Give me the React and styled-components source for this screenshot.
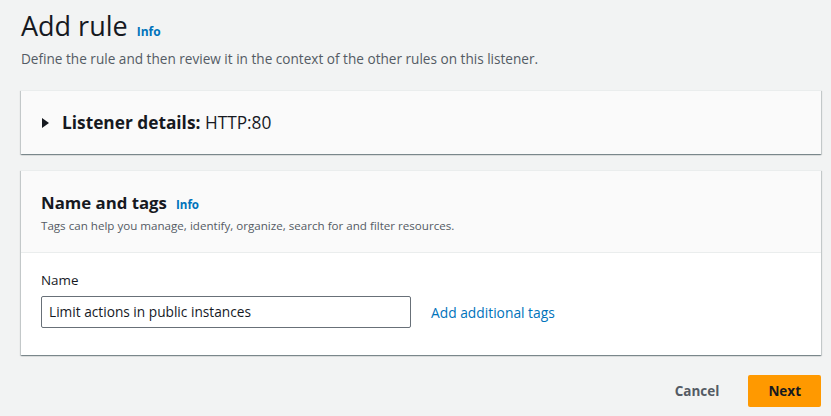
import React from "react";
import styled, { createGlobalStyle } from "styled-components";

const GlobalStyle = createGlobalStyle`
  body {
    margin: 0;
    background: #f2f3f3;
    font-family: "Open Sans", "Noto Sans", Arial, sans-serif;
    color: #16191f;
  }
`;

const Page = styled.div`
  width: 800px;
  padding: 6px 10px 9px 21px;
`;

const TitleRow = styled.div`
  display: flex;
  align-items: baseline;
  gap: 9px;
`;

const Title = styled.h1`
  margin: 0;
  font-size: 27px;
  line-height: 40px;
  font-weight: 400;
  color: #16191f;
`;

const InfoLink = styled.a`
  font-size: ${(p) => p.$size || 12}px;
  font-weight: 700;
  color: #0073bb;
  text-decoration: none;
`;

const Description = styled.p`
  margin: 2px 0 0;
  font-size: 13.6px;
  line-height: 22px;
  color: #545b64;
`;

const Card = styled.section`
  margin-top: ${(p) => p.$top}px;
  background: #fff;
  border-top: 1px solid #eaeded;
  box-shadow: 0 1px 1px 0 rgba(0, 28, 36, 0.3),
    1px 1px 1px 0 rgba(0, 28, 36, 0.15), -1px 1px 1px 0 rgba(0, 28, 36, 0.15);
`;

const CollapsedHeader = styled.div`
  display: flex;
  align-items: center;
  gap: 13px;
  height: 63px;
  padding: 0 20px 0 21px;
  background: #fafafa;
  font-size: 17.3px;
`;

const Caret = styled.span`
  width: 0;
  height: 0;
  border-top: 5px solid transparent;
  border-bottom: 5px solid transparent;
  border-left: 7px solid #16191f;
`;

const Strong = styled.strong`
  font-weight: 700;
`;

const SectionHeader = styled.div`
  background: #fafafa;
  border-bottom: 1px solid #eaeded;
  padding: 20px 20px 18px;
`;

const SectionTitleRow = styled.div`
  display: flex;
  align-items: baseline;
  gap: 9px;
`;

const SectionTitle = styled.h2`
  margin: 0;
  font-size: 16.8px;
  line-height: 24px;
  font-weight: 700;
`;

const SectionDesc = styled.p`
  margin: 3px 0 0;
  font-size: 11.6px;
  line-height: 16px;
  color: #545b64;
`;

const SectionBody = styled.div`
  padding: 17px 20px 27px;
`;

const Label = styled.label`
  display: block;
  font-size: 13.4px;
  line-height: 20px;
  color: #16191f;
`;

const FieldRow = styled.div`
  display: flex;
  align-items: center;
  gap: 20px;
  margin-top: 6px;
`;

const Input = styled.input`
  box-sizing: border-box;
  width: 370px;
  height: 32px;
  padding: 0 7px 1px;
  border: 1px solid #687078;
  border-radius: 2px;
  font-family: inherit;
  font-size: 13.7px;
  color: #16191f;
  background: #fff;
`;

const TextLink = styled.a`
  font-size: 13.8px;
  color: #0073bb;
  text-decoration: none;
`;

const Footer = styled.div`
  display: flex;
  justify-content: flex-end;
  align-items: center;
  gap: 10px;
  margin-top: 20px;
`;

const Button = styled.button`
  height: 32px;
  padding: 0 ${(p) => (p.$primary ? "20px" : "19px")};
  border: none;
  border-radius: 2px;
  font-family: inherit;
  font-size: 13.5px;
  font-weight: 700;
  color: ${(p) => (p.$primary ? "#16191f" : "#545b64")};
  background: ${(p) => (p.$primary ? "#ff9900" : "transparent")};
  cursor: pointer;
`;

export default function App() {
  return (
    <Page>
      <GlobalStyle />
      <TitleRow>
        <Title>Add rule</Title>
        <InfoLink href="#">Info</InfoLink>
      </TitleRow>
      <Description>
        Define the rule and then review it in the context of the other rules on
        this listener.
      </Description>

      <Card $top={20}>
        <CollapsedHeader>
          <Caret />
          <span>
            <Strong>Listener details:</Strong> HTTP:80
          </span>
        </CollapsedHeader>
      </Card>

      <Card $top={16}>
        <SectionHeader>
          <SectionTitleRow>
            <SectionTitle>Name and tags</SectionTitle>
            <InfoLink href="#" $size={11.6}>
              Info
            </InfoLink>
          </SectionTitleRow>
          <SectionDesc>
            Tags can help you manage, identify, organize, search for and filter
            resources.
          </SectionDesc>
        </SectionHeader>
        <SectionBody>
          <Label htmlFor="rule-name">Name</Label>
          <FieldRow>
            <Input
              id="rule-name"
              defaultValue="Limit actions in public instances"
            />
            <TextLink href="#">Add additional tags</TextLink>
          </FieldRow>
        </SectionBody>
      </Card>

      <Footer>
        <Button>Cancel</Button>
        <Button $primary>Next</Button>
      </Footer>
    </Page>
  );
}
